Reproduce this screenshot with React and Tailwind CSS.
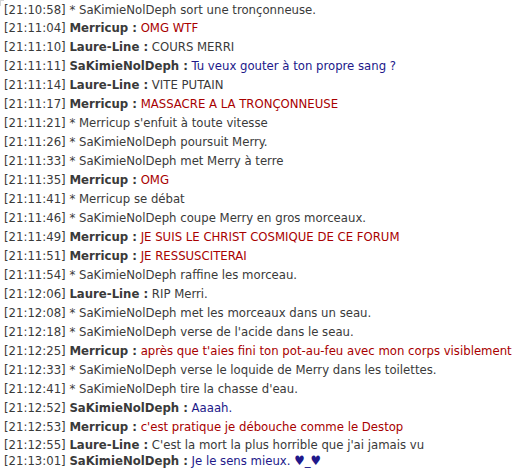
import React from 'react';

const RED = 'text-[#a80000]';
const NAVY = 'text-[#21188a]';
const GREY = 'text-[#3a3a3a]';

const nameColor = {
  Merricup: RED,
  SaKimieNolDeph: NAVY,
  'Laure-Line': GREY,
};

// [time, name or null (action), text]
const lines = [
  ['21:10:58', null, 'SaKimieNolDeph sort une tronçonneuse.'],
  ['21:11:04', 'Merricup', 'OMG WTF'],
  ['21:11:10', 'Laure-Line', 'COURS MERRI'],
  ['21:11:11', 'SaKimieNolDeph', 'Tu veux gouter à ton propre sang ?'],
  ['21:11:14', 'Laure-Line', 'VITE PUTAIN'],
  ['21:11:17', 'Merricup', 'MASSACRE A LA TRONÇONNEUSE'],
  ['21:11:21', null, "Merricup s'enfuit à toute vitesse"],
  ['21:11:26', null, 'SaKimieNolDeph poursuit Merry.'],
  ['21:11:33', null, 'SaKimieNolDeph met Merry à terre'],
  ['21:11:35', 'Merricup', 'OMG'],
  ['21:11:41', null, 'Merricup se débat'],
  ['21:11:46', null, 'SaKimieNolDeph coupe Merry en gros morceaux.'],
  ['21:11:49', 'Merricup', 'JE SUIS LE CHRIST COSMIQUE DE CE FORUM'],
  ['21:11:51', 'Merricup', 'JE RESSUSCITERAI'],
  ['21:11:54', null, 'SaKimieNolDeph raffine les morceau.'],
  ['21:12:06', 'Laure-Line', 'RIP Merri.'],
  ['21:12:08', null, 'SaKimieNolDeph met les morceaux dans un seau.'],
  ['21:12:18', null, "SaKimieNolDeph verse de l'acide dans le seau."],
  ['21:12:25', 'Merricup', "après que t'aies fini ton pot-au-feu avec mon corps visiblement"],
  ['21:12:33', null, 'SaKimieNolDeph verse le loquide de Merry dans les toilettes.'],
  ['21:12:41', null, "SaKimieNolDeph tire la chasse d'eau."],
  ['21:12:52', 'SaKimieNolDeph', 'Aaaah.'],
  ['21:12:53', 'Merricup', "c'est pratique je débouche comme le Destop"],
  ['21:12:55', 'Laure-Line', "C'est la mort la plus horrible que j'ai jamais vu"],
  ['21:13:01', 'SaKimieNolDeph', 'Je le sens mieux. ♥_♥'],
];

// row heights: the last lines of the log sit a bit tighter
const rowHeight = (i) => {
  if (i === 0) return 'h-[18px]';
  if (i === 22) return 'h-[18px]';
  if (i === 23) return 'h-[16px]';
  return 'h-[19px]';
};

const ChatLine = ({ time, name, text, className }) => (
  <div className={`whitespace-nowrap pl-[4px] pt-[3px] leading-[13px] ${className}`}>
    <span className={GREY}>[{time}]</span>{' '}
    {name ? (
      <>
        <span className={`font-bold ${GREY}`}>{name} :</span>{' '}
        <span className={nameColor[name]}>{text}</span>
      </>
    ) : (
      <span className={GREY}>* {text}</span>
    )}
  </div>
);

export default function App() {
  return (
    <div className="relative h-[473px] w-[519px] overflow-hidden bg-white text-[13px] font-['Tahoma','DejaVu_Sans_Condensed','DejaVu_Sans',sans-serif]">
      {/* faint corner of the log box */}
      <div className="absolute left-0 top-0 h-[6px] w-[4px] border-l border-t border-[#d6d6d6]" />
      {lines.map(([time, name, text], i) => (
        <ChatLine key={time} time={time} name={name} text={text} className={rowHeight(i)} />
      ))}
    </div>
  );
}
